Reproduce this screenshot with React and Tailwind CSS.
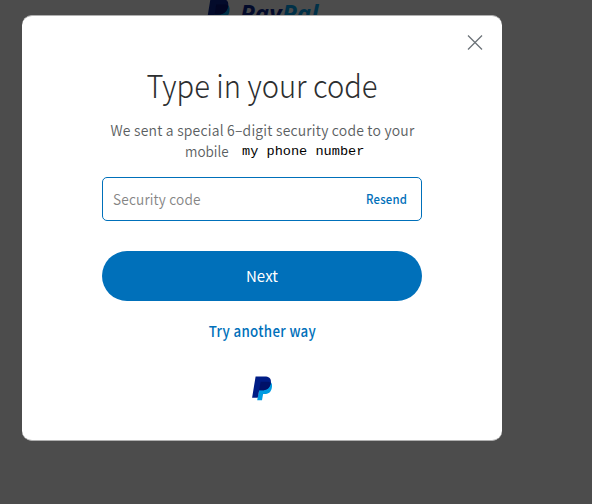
function Monogram({ className, dark = "#253b80", deep = "#142c8e", light = "#179bd7" }) {
  return (
    <svg viewBox="0 0 21 25" className={className} aria-hidden="true">
      <path d="M8.5 6h10.2c1.4 1.4 1.6 3.5 1.1 6-.9 4.5-3.6 6-7.3 6h-1.4l-1.1 6.2H5.2z" fill={light} />
      <path d="M3.6.6h9c4.8 0 6.9 2.3 6.2 6.4-.8 5-3.9 7.3-8.8 7.3H7.2L5.7 21.8H.1z" fill={dark} />
      <path d="M8.6 5.7h7.9c.9.2 1.7.5 2.3 1-.7 5-3.6 7.6-8.8 7.6H7.2z" fill={deep} />
    </svg>
  );
}

export default function App() {
  return (
    <div className="relative h-[504px] w-[592px] overflow-hidden bg-[#4c4c4c] font-['Noto_Sans_CJK_SC',sans-serif]">
      <header className="flex h-8 items-start gap-[9px] pl-[206px]">
        <Monogram className="-mt-[2px] h-[29px] w-[25px]" dark="#030b2b" deep="#020623" light="#003148" />
        <span className="mt-[-1px] font-['Open_Sans',sans-serif] text-[24px] leading-[28px] font-bold tracking-[0.2px] italic">
          <span className="text-[#030b2b]">Pay</span>
          <span className="text-[#003148]">Pal</span>
        </span>
      </header>

      <main className="absolute top-[15px] left-[22px] flex h-[426px] w-[480px] flex-col items-center rounded-[10px] border-y border-[#b0b0b0] bg-white px-20">
        <button className="-mr-[61px] mt-[18px] self-end" aria-label="Close">
          <svg viewBox="0 0 16 16" className="size-4" fill="none" stroke="#6c7378" strokeWidth="1.3">
            <path d="M1 1.5l14 14M15 1.5L1 15.5" />
          </svg>
        </button>
        <h1 className="mt-[12px] h-[44px] scale-x-[0.91] text-[32px] leading-[44px] font-light whitespace-nowrap text-[#2c2e2f]">
          Type in your code
        </h1>
        <div className="mt-[13px] flex h-[42px] flex-col items-center text-[15px] leading-[21px] whitespace-nowrap text-[#5a5e61]">
          <p className="scale-x-[0.93] font-[350] tracking-[0.22px]">We sent a special 6–digit security code to your</p>
          <p className="flex w-[154px] items-start">
            <span className="w-[57px] shrink-0 origin-left scale-x-[0.9] font-[350]">mobile</span>
            <span className="mt-px font-['Liberation_Mono',monospace] text-[13.6px] text-black">my phone number</span>
          </p>
        </div>
        <div className="mt-4 flex h-[44px] w-80 shrink-0 items-center justify-between rounded-[5px] border border-[#0070ba] pr-[14px] pl-[10px]">
          <span className="origin-left scale-x-[0.91] text-[15px] font-[350] tracking-[0.2px] text-[#858585]">Security code</span>
          <button className="origin-right scale-x-[0.91] text-[12.5px] font-medium tracking-[0.2px] text-[#0070ba]">Resend</button>
        </div>
        <button className="mt-[30px] h-[50px] w-80 shrink-0 rounded-full bg-[#0070ba] pt-px text-[15px] tracking-[0.1px] text-white">
          Next
        </button>
        <a className="mt-[18px] scale-x-[0.89] text-[15px] leading-6 font-medium tracking-[0.35px] whitespace-nowrap text-[#0070ba]">
          Try another way
        </a>
        <Monogram className="mt-[33px] h-[25px] w-[21px]" dark="#001c85" deep="#001168" light="#009be1" />
      </main>
    </div>
  );
}
